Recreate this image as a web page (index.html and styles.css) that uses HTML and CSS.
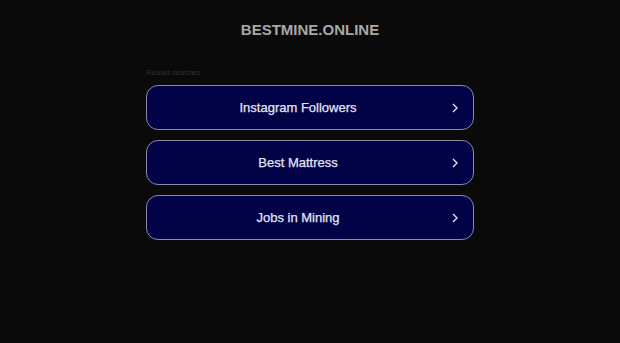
FILE: index.html
```html
<!DOCTYPE html>
<html>
<head>
<meta charset="utf-8">
<link rel="stylesheet" href="styles.css">
</head>
<body>
<div class="page">
  <h1 class="domain">BESTMINE.ONLINE</h1>
  <div class="related">
    <div class="label">Related searches</div>
    <a class="item" href="#"><span class="text">Instagram Followers</span><svg class="chev" width="6" height="10" viewBox="0 0 6 10"><path d="M1 1 L5 5 L1 9" fill="none" stroke="#e0e0ff" stroke-width="1.4"/></svg></a>
    <a class="item" href="#"><span class="text">Best Mattress</span><svg class="chev" width="6" height="10" viewBox="0 0 6 10"><path d="M1 1 L5 5 L1 9" fill="none" stroke="#e0e0ff" stroke-width="1.4"/></svg></a>
    <a class="item" href="#"><span class="text">Jobs in Mining</span><svg class="chev" width="6" height="10" viewBox="0 0 6 10"><path d="M1 1 L5 5 L1 9" fill="none" stroke="#e0e0ff" stroke-width="1.4"/></svg></a>
  </div>
</div>
</body>
</html>
```
FILE: styles.css
```css
html, body {
  margin: 0;
  padding: 0;
  background: #0a0a0a;
  height: 100%;
}
body {
  font-family: "Liberation Sans", Arial, sans-serif;
}
.page {
  display: flex;
  flex-direction: column;
  align-items: center;
}
.domain {
  margin: 20px 0 0 0;
  font-size: 15px;
  line-height: 19px;
  font-weight: bold;
  letter-spacing: 0;
  color: #a8a8a8;
}
.related {
  width: 328px;
  margin-top: 30px;
  display: flex;
  flex-direction: column;
  gap: 10px;
}
.label {
  font-size: 7px;
  line-height: 8px;
  color: #303030;
  margin-bottom: -2px;
}
.item {
  position: relative;
  display: flex;
  align-items: center;
  justify-content: center;
  height: 43px;
  padding-right: 24px;
  border: 1px solid #8a8ab0;
  border-radius: 12px;
  background: #020246;
  text-decoration: none;
}
.text {
  color: #e4e4f4;
  font-size: 13px;
  font-weight: normal;
  letter-spacing: 0;
  -webkit-text-stroke: 0.25px #e4e4f4;
}
.chev {
  position: absolute;
  right: 15px;
  top: 17px;
}
```
